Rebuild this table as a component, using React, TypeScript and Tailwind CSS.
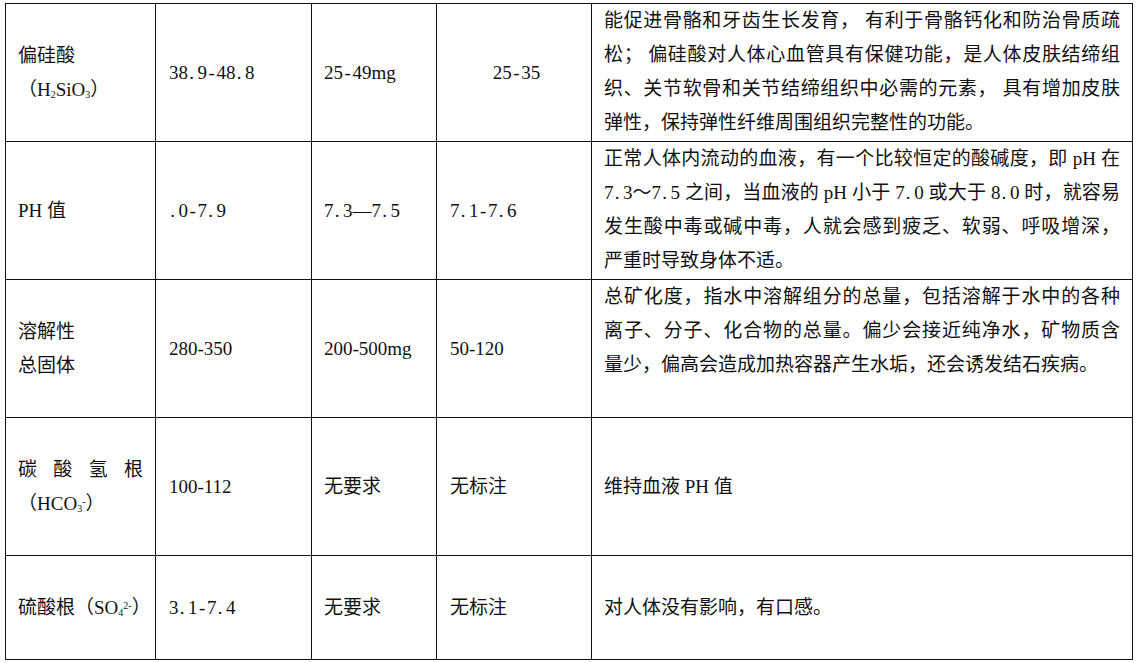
import React from "react";

type CellProps = { children?: React.ReactNode; className?: string };

function Cell({ children, className = "" }: CellProps) {
  return (
    <div
      className={
        "border-r border-b border-[#111] px-[12px] flex flex-col min-w-0 " +
        className
      }
    >
      {children}
    </div>
  );
}

function J({ children }: { children: React.ReactNode }) {
  return <div className="text-justify [text-align-last:justify] whitespace-nowrap">{children}</div>;
}

function L({ children }: { children: React.ReactNode }) {
  return <div className="whitespace-nowrap">{children}</div>;
}

/* half-width monospaced digits, like the Song typeface of the original */
function M({ t }: { t: string }) {
  return (
    <>
      {Array.from(t).map((c, i) => (
        <span
          key={i}
          className={
            c === "."
              ? "inline-block w-[0.5em] text-left pl-[0.06em]"
              : c === "—" || c === "～"
              ? "inline-block w-[1em] text-center"
              : "inline-block w-[0.5em] text-center"
          }
        >
          {c}
        </span>
      ))}
    </>
  );
}

export default function App() {
  return (
    <div className="w-[1138px] h-[663px] bg-white overflow-hidden pt-[3px] pl-[5px]">
      <div className="grid grid-cols-[150px_156px_125px_155px_541px] grid-rows-[138px_138px_138px_138px_104px] border-l border-t border-[#111] w-max font-['Liberation_Serif','Noto_Sans_CJK_SC',serif] text-[19px] leading-[34px] text-[#111]">
        {/* Row 1 */}
        <Cell className="justify-center">
          <L>偏硅酸</L>
          <L>
            （H<sub className="text-[10px]">2</sub>SiO<sub className="text-[10px]">3</sub>）
          </L>
        </Cell>
        <Cell className="justify-center pl-[13px]">
          <L>
            <M t="38.9-48.8" />
          </L>
        </Cell>
        <Cell className="justify-center">
          <L>
            <M t="25-49" />mg
          </L>
        </Cell>
        <Cell className="justify-center items-center pl-[17px]">
          <L>
            <M t="25-35" />
          </L>
        </Cell>
        <Cell className="justify-start">
          <J>能促进骨骼和牙齿生长发育， 有利于骨骼钙化和防治骨质疏</J>
          <J>松； 偏硅酸对人体心血管具有保健功能，是人体皮肤结缔组</J>
          <J>织、关节软骨和关节结缔组织中必需的元素， 具有增加皮肤</J>
          <L>弹性，保持弹性纤维周围组织完整性的功能。</L>
        </Cell>

        {/* Row 2 */}
        <Cell className="justify-center">
          <L>PH 值</L>
        </Cell>
        <Cell className="justify-center pl-[13px]">
          <L>
            <M t=".0-7.9" />
          </L>
        </Cell>
        <Cell className="justify-center">
          <L>
            <M t="7.3—7.5" />
          </L>
        </Cell>
        <Cell className="justify-center pl-[13px]">
          <L>
            <M t="7.1-7.6" />
          </L>
        </Cell>
        <Cell className="justify-start">
          <J>正常人体内流动的血液，有一个比较恒定的酸碱度，即 pH 在</J>
          <J>
            <M t="7.3～7.5" /> 之间，当血液的 pH 小于 <M t="7.0" /> 或大于 <M t="8.0" /> 时，就容易
          </J>
          <J>发生酸中毒或碱中毒，人就会感到疲乏、软弱、呼吸增深，</J>
          <L>严重时导致身体不适。</L>
        </Cell>

        {/* Row 3 */}
        <Cell className="justify-center">
          <L>溶解性</L>
          <L>总固体</L>
        </Cell>
        <Cell className="justify-center pl-[13px]">
          <L>280-350</L>
        </Cell>
        <Cell className="justify-center">
          <L>200-500mg</L>
        </Cell>
        <Cell className="justify-center pl-[13px]">
          <L>50-120</L>
        </Cell>
        <Cell className="justify-start">
          <J>总矿化度，指水中溶解组分的总量，包括溶解于水中的各种</J>
          <J>离子、分子、化合物的总量。偏少会接近纯净水，矿物质含</J>
          <L>量少，偏高会造成加热容器产生水垢，还会诱发结石疾病。</L>
        </Cell>

        {/* Row 4 */}
        <Cell className="justify-center">
          <J>碳酸氢根</J>
          <L>
            （HCO<sub className="text-[10px]">3</sub>
            <sup className="text-[10px]">-</sup>）
          </L>
        </Cell>
        <Cell className="justify-center pl-[13px]">
          <L>100-112</L>
        </Cell>
        <Cell className="justify-center">
          <L>无要求</L>
        </Cell>
        <Cell className="justify-center pl-[13px]">
          <L>无标注</L>
        </Cell>
        <Cell className="justify-center">
          <L>维持血液 PH 值</L>
        </Cell>

        {/* Row 5 */}
        <Cell className="justify-center">
          <L>
            硫酸根（SO<sub className="text-[10px]">4</sub>
            <sup className="text-[10px]">2-</sup>）
          </L>
        </Cell>
        <Cell className="justify-center pl-[13px]">
          <L>
            <M t="3.1-7.4" />
          </L>
        </Cell>
        <Cell className="justify-center">
          <L>无要求</L>
        </Cell>
        <Cell className="justify-center pl-[13px]">
          <L>无标注</L>
        </Cell>
        <Cell className="justify-center">
          <L>对人体没有影响，有口感。</L>
        </Cell>
      </div>
    </div>
  );
}
